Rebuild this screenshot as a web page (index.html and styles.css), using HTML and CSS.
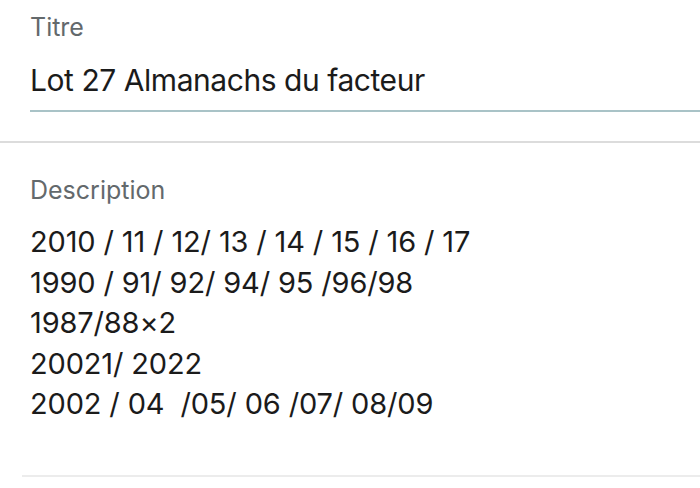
FILE: index.html
```html
<!DOCTYPE html>
<html lang="fr">
<head>
<meta charset="utf-8">
<link rel="stylesheet" href="styles.css">
</head>
<body>
<div class="form">
  <section class="field field-title">
    <div class="label">Titre</div>
    <div class="input">Lot 27 Almanachs du facteur</div>
  </section>
  <div class="divider"></div>
  <section class="field field-desc">
    <div class="label">Description</div>
    <div class="textarea">
      <div>2010 / 11 / 12/ 13 / 14 / 15 / 16 / 17</div>
      <div>1990 / 91/ 92/ 94/ 95 /96/98</div>
      <div>1987/88×2</div>
      <div>20021/ 2022</div>
      <div>2002 / 04&nbsp; /05/ 06 /07/ 08/09</div>
    </div>
  </section>
  <div class="divider2"></div>
</div>
</body>
</html>
```

FILE: styles.css
```css
html, body {
  margin: 0;
  padding: 0;
  background: #ffffff;
}
body {
  font-family: Inter, "Noto Sans", "Liberation Sans", sans-serif;
  color: #1b1b1b;
  width: 700px;
  height: 488px;
  overflow: hidden;
}
.form {
  display: flex;
  flex-direction: column;
}
.field {
  padding-left: 30px;
}
.label {
  font-size: 25px;
  color: #63696c;
  line-height: 30px;
}
.field-title {
  padding-top: 12px;
}
.input {
  margin-top: 18px;
  font-size: 30px;
  letter-spacing: -0.45px;
  line-height: 40px;
  padding-bottom: 10px;
  border-bottom: 2px solid #a9c3c7;
}
.divider {
  margin-top: 29px;
  height: 2px;
  background: #dcdcdc;
}
.field-desc {
  padding-top: 32px;
}
.textarea {
  margin-top: 17px;
  font-size: 29px;
  letter-spacing: -0.15px;
  line-height: 40.5px;
}
.divider2 {
  margin-top: 50px;
  margin-left: 22px;
  height: 2px;
  background: #ececec;
}
```
